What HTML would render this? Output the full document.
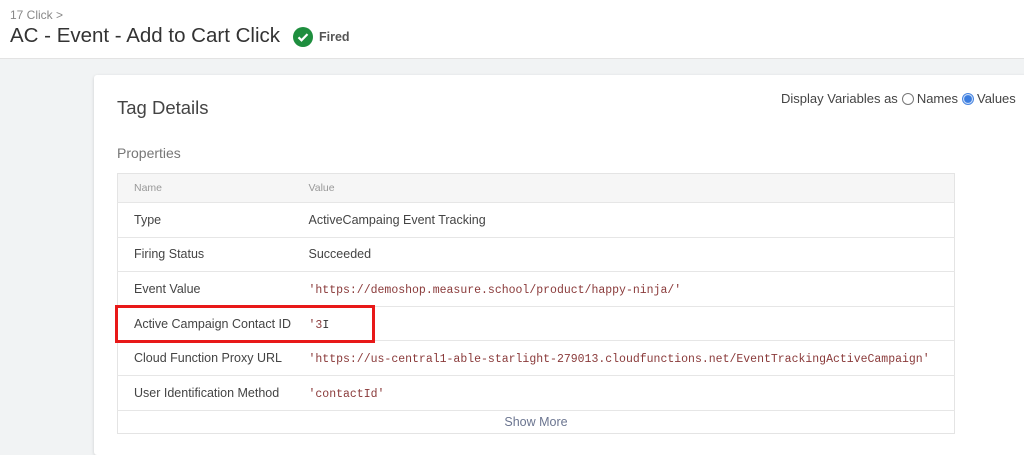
<!DOCTYPE html>
<html><head><meta charset="utf-8"><style>
*{margin:0;padding:0;box-sizing:border-box}
body{width:1024px;height:447px;overflow:hidden;background:#f1f3f4;font-family:"Liberation Sans",Arial,sans-serif;position:relative}
.top{position:absolute;left:0;top:0;width:1024px;height:59px;background:#fff;border-bottom:1px solid #e3e3e3}
.crumb{position:absolute;left:10px;top:8px;font-size:12px;color:#888}
.title{position:absolute;left:10px;top:24px;font-size:20.5px;color:#333}
.fired{position:absolute;left:293px;top:27px;display:flex;align-items:center;font-size:12.5px;color:#555;font-weight:bold}
.card{position:absolute;left:94px;top:75px;width:940px;height:380px;background:#fff;border-radius:3px;box-shadow:0 1px 3px rgba(0,0,0,.15)}
.h{position:absolute;left:117px;top:97px;font-size:18.5px;color:#444}
.props{position:absolute;left:117px;top:145px;font-size:14px;color:#777}
.disp{position:absolute;left:781px;top:91px;font-size:13px;color:#444;display:flex;align-items:center}
.r{display:inline-block;width:12px;height:12px;border-radius:50%;border:1px solid #777;margin:0 3px 0 4px}
.rv{border-color:#4a86e0;background:radial-gradient(#3b7de0 50%,#cfe0f8 60%)}
table{position:absolute;left:117px;top:173px;width:838px;border-collapse:collapse;border:1px solid #e4e4e4;border-radius:3px;font-size:12.5px;color:#444}
td{height:34.6px;border-top:1px solid #e6e6e6;padding:0}
td:first-child{padding-left:16px;width:191px}
tr.hd td{height:29px;background:#f6f6f6;font-size:10.5px;color:#999;border-top:none}
.m{font-family:"Liberation Mono",monospace;font-size:11.5px;color:#8a3a3a;padding-top:3px}
.sm td{height:23px;text-align:center;color:#6b7590;font-size:12.5px}
.red{position:absolute;left:115px;top:305px;width:260px;height:38px;border:3px solid #e81818}
</style></head><body>
<div class="top">
<div class="crumb">17 Click &gt;</div>
<div class="title">AC - Event - Add to Cart Click</div>
<div class="fired"><svg width="20" height="20" viewBox="0 0 20 20"><circle cx="10" cy="10" r="10" fill="#1e8e3e"/><path d="M5.5 10.3l3 3 6-6.2" stroke="#fff" stroke-width="2.2" fill="none"/></svg><span style="margin-left:6px">Fired</span></div>
</div>
<div class="card"></div>
<div class="h">Tag Details</div>
<div class="disp">Display Variables as<span class="r"></span>Names<span class="r rv"></span>Values</div>
<div class="props">Properties</div>
<table>
<tr class="hd"><td>Name</td><td>Value</td></tr>
<tr><td>Type</td><td>ActiveCampaing Event Tracking</td></tr>
<tr><td>Firing Status</td><td>Succeeded</td></tr>
<tr><td>Event Value</td><td class="m">'https://demoshop.measure.school/product/happy-ninja/'</td></tr>
<tr><td>Active Campaign Contact ID</td><td class="m">'3<span style="color:#333">I</span></td></tr>
<tr><td>Cloud Function Proxy URL</td><td class="m">'https://us-central1-able-starlight-279013.cloudfunctions.net/EventTrackingActiveCampaign'</td></tr>
<tr><td>User Identification Method</td><td class="m">'contactId'</td></tr>
<tr class="sm"><td colspan="2" style="padding:0">Show More</td></tr>
</table>
<div class="red"></div>
</body></html>
